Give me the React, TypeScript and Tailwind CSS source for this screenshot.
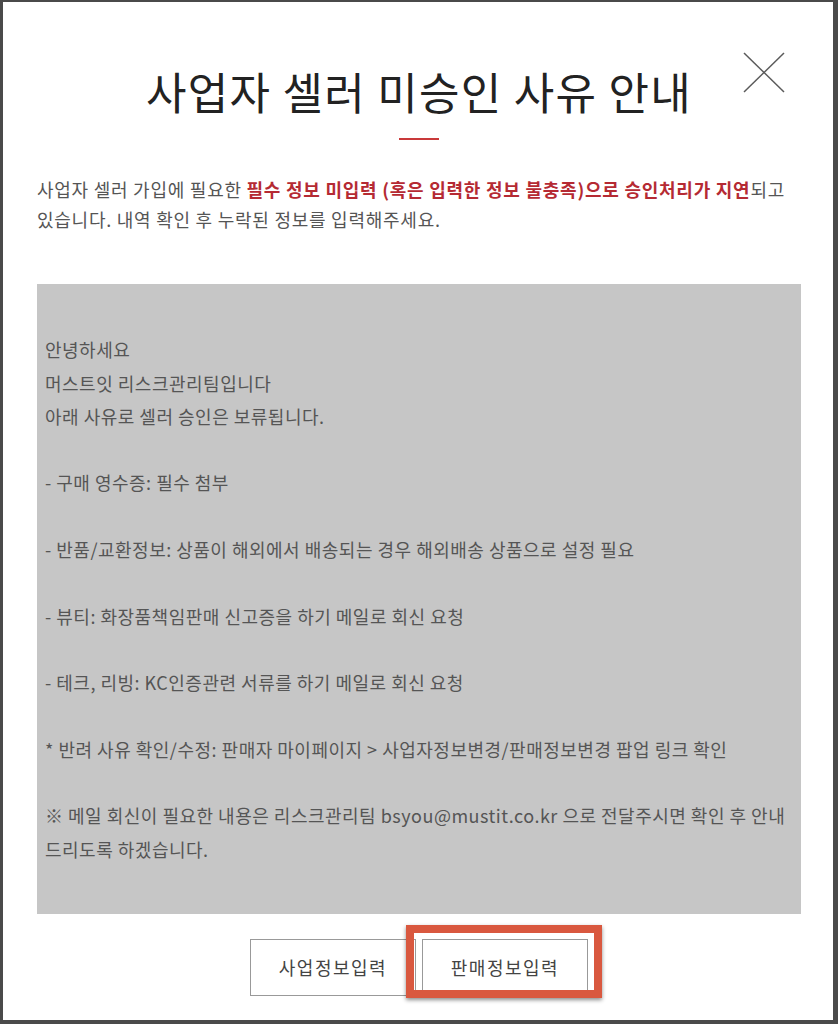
import React from "react";

const font = { fontFamily: '"Noto Sans CJK KR", "Noto Sans", sans-serif' };

export default function App() {
  return (
    <div
      className="relative w-[838px] h-[1024px] bg-white border-l-[3px] border-t-[2px] border-r-[5px] border-b-[4px] border-[#4a4a4a] pl-[34px] pr-[32px] pt-[60px] text-[#555]"
      style={font}
    >
      <button
        className="absolute top-[50px] right-[48px] w-[42px] h-[41px]"
        aria-label="close"
      >
        <svg width="42" height="41" viewBox="0 0 42 41">
          <line x1="1" y1="1" x2="41" y2="40" stroke="#5a5a5a" strokeWidth="1.5" />
          <line x1="41" y1="1" x2="1" y2="40" stroke="#5a5a5a" strokeWidth="1.5" />
        </svg>
      </button>

      <h1 className="text-center text-[44px] leading-[58px] tracking-[1.3px] font-normal text-[#222]">
        사업자 셀러 미승인 사유 안내
      </h1>
      <div className="mx-auto mt-[18px] h-[2px] w-[40px] bg-[#c9393a]" />

      <p className="mt-[34px] text-[18px] leading-[30px] tracking-[0.75px] text-[#555] whitespace-nowrap">
        사업자 셀러 가입에 필요한{" "}
        <span className="font-bold text-[#b52a33]">
          필수 정보 미입력 (혹은 입력한 정보 불충족)으로 승인처리가 지연
        </span>
        되고
        <br />
        있습니다. 내역 확인 후 누락된 정보를 입력해주세요.
      </p>

      <div className="mt-[50px] h-[630px] bg-[#c6c6c6] pl-[8px] pt-[16px] text-[18px] leading-[33.3px] tracking-[0.5px] text-[#555] whitespace-nowrap">
        <br />
        안녕하세요
        <br />
        머스트잇 리스크관리팀입니다
        <br />
        아래 사유로 셀러 승인은 보류됩니다.
        <br />
        <br />
        - 구매 영수증: 필수 첨부
        <br />
        <br />
        - 반품/교환정보: 상품이 해외에서 배송되는 경우 해외배송 상품으로 설정 필요
        <br />
        <br />
        - 뷰티: 화장품책임판매 신고증을 하기 메일로 회신 요청
        <br />
        <br />
        - 테크, 리빙: KC인증관련 서류를 하기 메일로 회신 요청
        <br />
        <br />
        * 반려 사유 확인/수정: 판매자 마이페이지 &gt; 사업자정보변경/판매정보변경 팝업 링크 확인
        <br />
        <br />
        ※ 메일 회신이 필요한 내용은 리스크관리팀 bsyou@mustit.co.kr 으로 전달주시면 확인 후 안내
        <br />
        드리도록 하겠습니다.
      </div>

      <div className="mt-[25px] flex justify-center">
        <div className="relative flex gap-[6px]">
          <button className="w-[166px] h-[57px] border border-[#999] bg-white text-[18px] tracking-[1.5px] text-[#444]">
            사업정보입력
          </button>
          <button className="w-[166px] h-[57px] border border-[#999] bg-white text-[18px] tracking-[1.5px] text-[#444]">
            판매정보입력
          </button>
          <div className="pointer-events-none absolute left-[156px] top-[-14px] w-[196px] h-[73px] border-[8px] border-[#d9583f] shadow-[0_2px_4px_rgba(0,0,0,0.45)]" />
        </div>
      </div>
    </div>
  );
}
